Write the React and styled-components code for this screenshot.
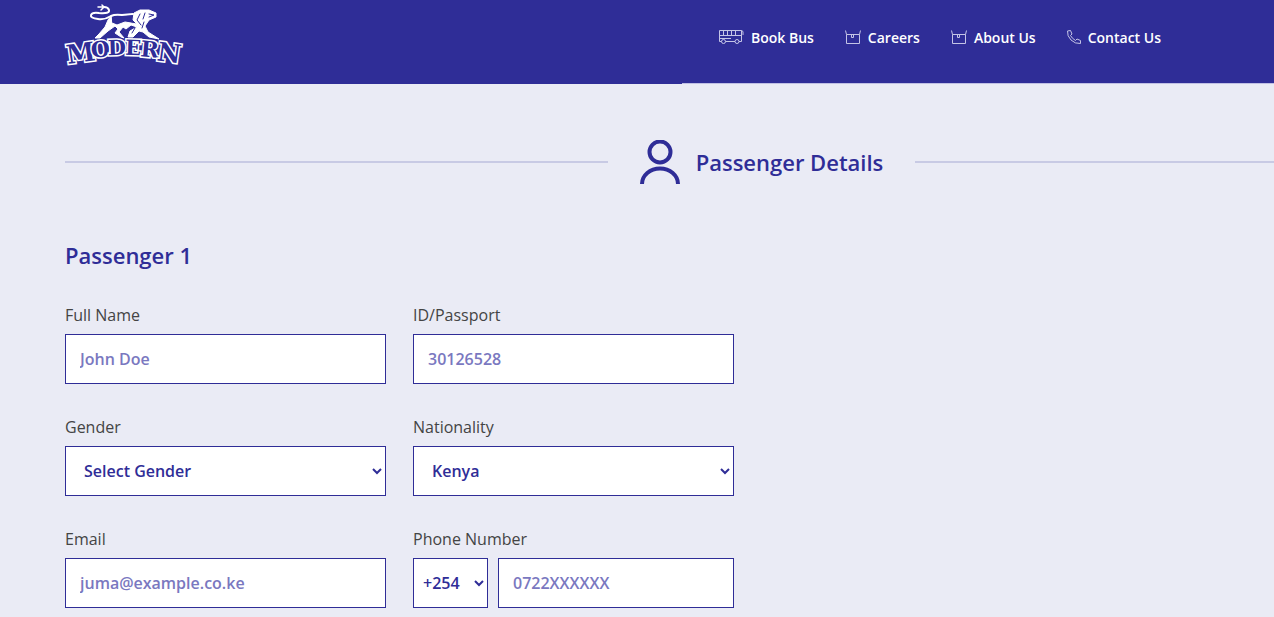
import styled, { createGlobalStyle } from "styled-components";

const GlobalStyle = createGlobalStyle`
  * {
    box-sizing: border-box;
  }

  body {
    margin: 0;
    background: #eaebf5;
    color: #444;
    font-family: "Open Sans", sans-serif;
    font-size: 16px;
  }
`;

const Header = styled.header`
  display: flex;
  align-items: flex-start;
  justify-content: space-between;
  height: 83px;
  padding: 0 113px 0 60px;
  background: #2f2d97;
`;

const Progress = styled.div`
  height: 1px;
  background: #c0c0e4;
`;

const ProgressBar = styled.div`
  height: 1px;
  background: #2f2d97;
`;

const LogoLink = styled.a`
  display: block;
  height: 80px;
`;

const Nav = styled.nav`
  display: flex;
  gap: 31px;
  padding-top: 25px;
`;

const NavLink = styled.a`
  display: flex;
  align-items: center;
  gap: 7px;
  height: 24px;
  color: #fff;
  font-size: 14px;
  font-weight: 600;
  text-decoration: none;
`;

const Main = styled.main`
  overflow: hidden;
  padding: 52px 0 8px 65px;
`;

const SectionHeading = styled.div`
  display: flex;
  align-items: center;
  width: calc(100% + 184px);
  height: 52px;
  gap: 32px;
`;

const Rule = styled.span`
  flex: 1;
  height: 2px;
  background: #c8cae4;
`;

const SectionTitle = styled.h1`
  display: flex;
  align-items: center;
  gap: 16px;
  margin: 0;
  color: #2f2d97;
  font-size: 22px;
  font-weight: 600;
  line-height: 32px;
`;

const PassengerTitle = styled.h2`
  margin: 51px 0 33px;
  color: #2f2d97;
  font-size: 22px;
  font-weight: 600;
  line-height: 32px;
`;

const Form = styled.form`
  display: grid;
  grid-template-columns: repeat(2, minmax(0, 321px));
  gap: 32px 27px;
`;

const Field = styled.div`
  display: flex;
  flex-direction: column;
  gap: 8px;
`;

const Label = styled.label`
  line-height: 22px;
`;

const Input = styled.input`
  width: 100%;
  height: 50px;
  padding: 0 14px;
  border: 1px solid #2f2d97;
  border-radius: 0;
  background: #fff;
  color: #2f2d97;
  font: 600 16px "Open Sans", sans-serif;

  &::placeholder {
    color: #7a78c0;
    opacity: 1;
  }
`;

const Select = styled.select`
  flex: none;
  width: ${(props) => (props.$compact ? "75px" : "100%")};
  height: 50px;
  padding: 0 0 0 ${(props) => (props.$compact ? "5px" : "14px")};
  border: 1px solid #2f2d97;
  border-radius: 0;
  background: #fff;
  color: #2f2d97;
  font: 600 16px "Open Sans", sans-serif;
`;

const PhoneRow = styled.div`
  display: flex;
  gap: 10px;
`;

const LogoLetter = styled.text`
  fill: #2f2d97;
  stroke: #fff;
  stroke-width: 3px;
  stroke-linejoin: miter;
  stroke-miterlimit: 3;
  paint-order: stroke;
  font-family: "DejaVu Serif", serif;
  font-weight: 700;
  text-anchor: middle;
`;

const logoLetters = [
  { letter: "M", x: 17, y: 62, size: 26, angle: -8 },
  { letter: "O", x: 36, y: 57, size: 22, angle: -5 },
  { letter: "D", x: 52, y: 55, size: 21, angle: -2 },
  { letter: "E", x: 68, y: 55, size: 21, angle: 2 },
  { letter: "R", x: 84, y: 57, size: 22, angle: 5 },
  { letter: "N", x: 103, y: 62, size: 26, angle: 8 },
];

function Logo() {
  return (
    <svg width="130" height="80" viewBox="-5 0 130 80" aria-label="Modern">
      <g fill="none" stroke="#fff" strokeLinecap="round" strokeLinejoin="round">
        <path
          strokeWidth="2"
          d="M46 16Q40 20 33 19Q25 18 26 15Q27 12 34 13Q45 14 44 10Q43 7 39 7M46 16Q50 14 57 15L68 14"
        />
        <path strokeWidth="1.5" d="M39 7L33 7M39 7L36 10M39 7L37 5" />
        <path
          fill="#fff"
          strokeWidth="1"
          d="M46 16L43 20L40 27L34 34L30 38H35L43 31L50 26L53 29L50 33L56 37L59 38L54 32L58 27L61 29L66 25L72 27L65 31L63 37H68L74 31L78 32L84 37L94 39L83 32L80 26L84 20L91 17L91 13L84 10L75 10L69 13L68 20L72 24L60 22L52 25L47 23Z"
        />
        <path
          fill="#2f2d97"
          stroke="none"
          d="M49 17L67 15.5L67 20L70 23L60 20.5L52 23L48 21Z"
        />
        <path
          stroke="#2f2d97"
          d="M75 14L72 20L76 25M80 13L78 19M79 22L77 28M84 14L89 15L84 17M70 28L67 33"
        />
      </g>
      {logoLetters.map(({ letter, x, y, size, angle }) => (
        <LogoLetter
          key={letter}
          x={x}
          y={y}
          fontSize={size}
          transform={`rotate(${angle} ${x} ${y})`}
        >
          {letter}
        </LogoLetter>
      ))}
    </svg>
  );
}

function BusIcon() {
  return (
    <svg width="25" height="14" viewBox="0 0 25 14" fill="none" stroke="#c4c4e6">
      <path d="M2.5 11.5H.5V.5H22.5L24 1.5V5M22.5 .5V11.5H20M6.5 11.5H16M.5 5.5H22.5M4.5 .5V5.5M8.5 .5V5.5M12.5 .5V5.5M16.5 .5V5.5M1 8.5H12" />
      <circle cx="4.5" cy="11.5" r="2" />
      <circle cx="18" cy="11.5" r="2" />
    </svg>
  );
}

function BoxIcon() {
  return (
    <svg width="16" height="14" viewBox="0 0 16 14" fill="none" stroke="#c4c4e6">
      <path d="M.5 .5L1.5 4.5V13.5H14.5V4.5L15.5 .5M1.5 4.5H14.5M6.5 4.5V7.5H8.5V4.5" />
    </svg>
  );
}

function PhoneIcon() {
  return (
    <svg width="14" height="14" viewBox="0 0 14 14" fill="none" stroke="#c4c4e6">
      <path d="M.5 1L3.5 .5L5 4L3.5 5.5Q5 8.5 8.5 10.5L10 9L13.5 10.5V13.5Q8 14 4 10Q0 6 .5 1Z" />
    </svg>
  );
}

function PersonIcon() {
  return (
    <svg width="40" height="44" viewBox="0 0 40 44" fill="none" stroke="#2f2d97" strokeWidth="4">
      <circle cx="20" cy="12" r="10.5" />
      <path d="M2 44A18 15.5 0 0 1 38 44" />
    </svg>
  );
}

const links = [
  { label: "Book Bus", icon: BusIcon },
  { label: "Careers", icon: BoxIcon },
  { label: "About Us", icon: BoxIcon },
  { label: "Contact Us", icon: PhoneIcon },
];

export default function App() {
  const progress = 53.5;

  return (
    <>
      <GlobalStyle />
      <Header>
        <LogoLink href="#" aria-label="Modern">
          <Logo />
        </LogoLink>
        <Nav>
          {links.map(({ label, icon: Icon }) => (
            <NavLink href="#" key={label}>
              <Icon />
              {label}
            </NavLink>
          ))}
        </Nav>
      </Header>
      <Progress>
        <ProgressBar style={{ width: `${progress}%` }} />
      </Progress>
      <Main>
        <SectionHeading>
          <Rule />
          <SectionTitle>
            <PersonIcon />
            Passenger Details
          </SectionTitle>
          <Rule />
        </SectionHeading>
        <PassengerTitle>Passenger 1</PassengerTitle>
        <Form>
          <Field>
            <Label htmlFor="name">Full Name</Label>
            <Input id="name" placeholder="John Doe" />
          </Field>
          <Field>
            <Label htmlFor="passport">ID/Passport</Label>
            <Input id="passport" placeholder="30126528" />
          </Field>
          <Field>
            <Label htmlFor="gender">Gender</Label>
            <Select id="gender">
              <option>Select Gender</option>
              <option>Male</option>
              <option>Female</option>
            </Select>
          </Field>
          <Field>
            <Label htmlFor="nationality">Nationality</Label>
            <Select id="nationality">
              <option>Kenya</option>
            </Select>
          </Field>
          <Field>
            <Label htmlFor="email">Email</Label>
            <Input id="email" type="email" placeholder="juma@example.co.ke" />
          </Field>
          <Field>
            <Label htmlFor="phone">Phone Number</Label>
            <PhoneRow>
              <Select $compact aria-label="Country code">
                <option>+254</option>
              </Select>
              <Input id="phone" type="tel" placeholder="0722XXXXXX" />
            </PhoneRow>
          </Field>
        </Form>
      </Main>
    </>
  );
}
